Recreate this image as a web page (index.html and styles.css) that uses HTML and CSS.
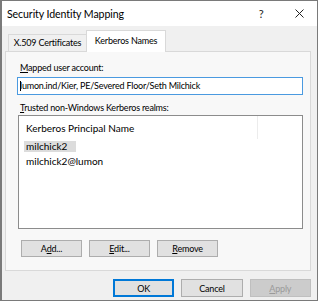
FILE: index.html
```html
<!DOCTYPE html>
<html lang="en">
<head>
  <meta charset="UTF-8" />
  <title>Security Identity Mapping</title>
  <link rel="stylesheet" href="styles.css">
</head>
<body>
  <div class="window">
    <div class="titlebar">
      <span class="title">Security Identity Mapping</span>
      <span class="help">?</span>
      <span class="close">
        <svg width="9" height="9" viewBox="0 0 9 9"><path d="M0.5 0.5 L8.5 8.5 M8.5 0.5 L0.5 8.5" stroke="#222" stroke-width="1" fill="none"/></svg>
      </span>
    </div>

    <div class="body">
      <div class="tabs">
        <div class="tab">X.509 Certificates</div>
        <div class="tab active">Kerberos Names</div>
      </div>

      <div class="panel">
        <div class="label"><u>M</u>apped user account:</div>
        <div class="field"><span class="caret"></span>lumon.ind/Kier, PE/Severed Floor/Seth Milchick</div>

        <div class="label label2"><u>T</u>rusted non-Windows Kerberos realms:</div>
        <div class="list">
          <div class="list-head"><span class="col">Kerberos Principal Name</span></div>
          <div class="row"><span class="sel">milchick2</span></div>
          <div class="row"><span>milchick2@lumon</span></div>
        </div>

        <div class="actions">
          <button class="btn small">A<u>d</u>d...</button>
          <button class="btn small"><u>E</u>dit...</button>
          <button class="btn small"><u>R</u>emove</button>
        </div>
      </div>

      <div class="footer">
        <button class="btn default">OK</button>
        <button class="btn">Cancel</button>
        <button class="btn" disabled><u>A</u>pply</button>
      </div>
    </div>
  </div>
</body>
</html>
```

FILE: styles.css
```css
html, body {
  margin: 0; padding: 0; background: #fff;
  font-family: Lato, "Noto Sans", sans-serif; font-size: 9px; color: #000;
  letter-spacing: -0.2px;
}

.window {
  width: 318px; height: 301px; box-sizing: border-box;
  border: 1px solid #7a7a7a; border-left-width: 2px;
  display: flex; flex-direction: column;
}

/* title bar */
.titlebar {
  height: 25px; background: #fff;
  display: flex; align-items: center;
}
.title { flex: 1; padding-left: 5px; font-size: 10.6px; letter-spacing: -0.1px; }
.help { width: 40px; text-align: center; font-size: 11px; color: #222; }
.close { width: 36px; display: flex; justify-content: center; }

.body {
  flex: 1; background: #f0f0f0;
  padding: 4px 6px 0 3px;
  display: flex; flex-direction: column;
}

/* tabs */
.tabs { display: flex; align-items: flex-end; margin-left: 3px; height: 21px; }
.tab {
  width: 77px; height: 16px; line-height: 16px; text-align: center;
  border: 1px solid #d9d9d9; border-bottom: none;
  background: #f0f0f0;
}
.tab.active {
  width: 78px; height: 21px; line-height: 19px;
  background: #fff; position: relative; z-index: 1;
  margin-left: -1px; margin-bottom: -1px;
}

.panel {
  height: 220px; box-sizing: border-box;
  border: 1px solid #d9d9d9; background: #f8f8f8;
  padding: 9px 7px 0 11px;
  display: flex; flex-direction: column;
}

.label { line-height: 13px; padding-left: 3px; }
.label2 { margin-top: 6px; }

.field {
  height: 18px; margin-top: 3px; box-sizing: border-box;
  border: 1px solid #4a9ae0; background: #fff;
  line-height: 16px; padding-left: 2px; white-space: nowrap; overflow: hidden;
}
.caret { display: inline-block; width: 1px; height: 10px; background: #000; vertical-align: -2px; margin-right: -1px; }

.list {
  height: 114px; margin-top: 1px; margin-left: 1px; box-sizing: border-box;
  border: 1px solid #8c8c8c; background: #fff;
  font-size: 10px; letter-spacing: 0;
}
.list-head { height: 23px; display: flex; }
.col {
  width: 231px; padding: 5px 0 0 7px; line-height: 14px;
  border-right: 1px solid #ececec; height: 18px;
}
.row { height: 15px; line-height: 15px; padding-left: 5px; }
.row span { padding: 0 2px; display: inline-block; line-height: 11px; }
.row .sel { background: #dcdcdc; padding-right: 9px; }

/* buttons */
.btn {
  font-family: inherit; font-size: 9px; letter-spacing: -0.2px; color: #000;
  background: #e1e1e1; border: 1px solid #adadad;
  padding: 0; margin: 0;
}

.actions { display: flex; gap: 7px; margin-top: 11px; margin-left: 4px; }
.btn.small { width: 61px; height: 17px; }

.footer { display: flex; gap: 7px; margin-top: 8px; padding-left: 108px; }
.footer .btn { width: 62px; height: 18px; }
.btn.default { border: 1px solid #0078d7; box-shadow: inset 0 0 0 1px #0078d7; }
.btn:disabled { background: #cccccc; border-color: #bfbfbf; color: #9a9a9a; }
```
